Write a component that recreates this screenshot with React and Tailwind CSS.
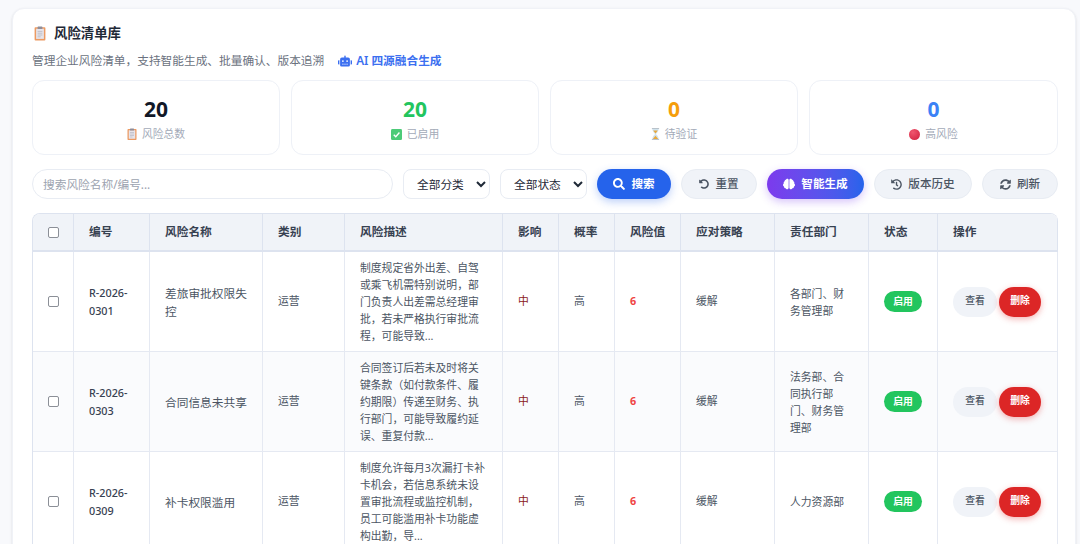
import { FaRobot, FaSearch, FaUndoAlt, FaBrain, FaHistory, FaSyncAlt } from 'react-icons/fa'

const risks = [
  {
    id: 'R-2026-0301',
    name: '差旅审批权限失控',
    desc: '制度规定省外出差、自驾或乘飞机需特别说明，部门负责人出差需总经理审批，若未严格执行审批流程，可能导致...',
    dept: '各部门、财务管理部',
  },
  {
    id: 'R-2026-0303',
    name: '合同信息未共享',
    desc: '合同签订后若未及时将关键条款（如付款条件、履约期限）传递至财务、执行部门，可能导致履约延误、重复付款...',
    dept: '法务部、合同执行部门、财务管理部',
  },
  {
    id: 'R-2026-0309',
    name: '补卡权限滥用',
    desc: '制度允许每月3次漏打卡补卡机会，若信息系统未设置审批流程或监控机制，员工可能滥用补卡功能虚构出勤，导...',
    dept: '人力资源部',
  },
]

function ClipboardIcon({ size = 12 }) {
  return (
    <svg width={size} height={size * 1.25} viewBox="0 0 20 25" className="shrink-0">
      <rect x="1" y="2" width="18" height="22" rx="1.5" fill="#ec9a62" />
      <rect x="3.500" y="4.500" width="13" height="17" fill="#e6e4ea" />
      <rect x="6" y="1" width="8" height="4" rx="1" fill="#8f8d99" />
      <path d="M6 9h8M6 12h8M6 15h8M6 18h5" stroke="#a9a8b4" strokeWidth="1" />
    </svg>
  )
}

function CheckIcon() {
  return (
    <svg width="11" height="11" viewBox="0 0 12 12" className="shrink-0">
      <rect width="12" height="12" rx="1.5" fill="#4ccb78" />
      <path d="M3 6.200 5.200 8.400 9.200 3.900" fill="none" stroke="#fff" strokeWidth="1.500" />
    </svg>
  )
}

function HourglassIcon() {
  return (
    <svg width="9" height="12" viewBox="0 0 10 13" className="shrink-0">
      <path d="M1 .5h8M1 12.500h8" stroke="#a9b4bd" strokeWidth="1" />
      <path d="M1.500 1h7C8.500 4 6 5.500 5.500 6.500 6 7.500 8.500 9 8.500 12h-7C1.500 9 4 7.500 4.500 6.500 4 5.500 1.500 4 1.500 1Z" fill="#cfe3ee" />
      <path d="M2.500 2.500h5L5 6ZM2 12l3-3.500L8 12Z" fill="#e9a83c" />
    </svg>
  )
}

function RedDot() {
  return <span className="w-[11px] h-[11px] rounded-full shrink-0 bg-[radial-gradient(circle_at_35%_30%,#f0566e,#cf1f3d)]" />
}

function Stat({ value, color, icon, label }) {
  return (
    <div className="h-[75px] pt-[2px] rounded-xl border border-[#eef1f7] bg-white flex flex-col items-center justify-center">
      <div className={`text-[21px] leading-[28px] font-bold ${color}`}>{value}</div>
      <div className="mt-[3px] flex items-center gap-[5px] text-[10.8px] leading-[16px] text-[#a3aab8]">
        {icon}
        {label}
      </div>
    </div>
  )
}

function GhostButton({ icon, label, width }) {
  return (
    <button className={`${width} h-[30px] rounded-full bg-[#f0f3f8] border border-[#e8ecf3] flex items-center justify-center gap-[6px] text-[11.6px] font-medium text-[#4b5563]`}>
      {icon}
      {label}
    </button>
  )
}

function App() {
  const th = 'border-r border-b-2 border-[#dde3ef] px-[15px] text-left text-[11.7px] font-semibold text-[#374151] whitespace-nowrap'
  const td = 'border-r border-b border-[#e5e9f2] px-[15px] text-[#4b5563]'

  return (
    <div className="h-[544px] overflow-hidden bg-[#f8f9fc] pt-2 pl-3 pr-1 font-['Noto_Sans','Noto_Sans_CJK_SC',sans-serif]">
      <div className="rounded-t-xl bg-white border border-[#f0f2f7] shadow-sm pt-[14px] pl-[19px] pr-[17px] h-[600px]">
        <div className="flex items-center gap-[8px] h-[20px] pl-[2px] text-[13.4px] font-bold text-[#1f2937]">
          <ClipboardIcon size={12} />
          风险清单库
        </div>
        <div className="mt-[8px] h-[20px] flex items-center text-[11.7px] text-[#6b7280]">
          管理企业风险清单，支持智能生成、批量确认、版本追溯
          <span className="ml-[14px] flex items-center gap-[4px] font-semibold text-[#3b6ff0]">
            <FaRobot className="text-[14px]" />
            AI 四源融合生成
          </span>
        </div>

        <div className="mt-[9px] grid grid-cols-[248px_248px_248px_249px] gap-[11px]">
          <Stat value="20" color="text-[#111827]" icon={<ClipboardIcon size={10} />} label="风险总数" />
          <Stat value="20" color="text-[#22c55e]" icon={<CheckIcon />} label="已启用" />
          <Stat value="0" color="text-[#f59e0b]" icon={<HourglassIcon />} label="待验证" />
          <Stat value="0" color="text-[#3b82f6]" icon={<RedDot />} label="高风险" />
        </div>

        <div className="mt-[14px] flex items-center gap-[10px]">
          <input
            placeholder="搜索风险名称/编号..."
            className="w-[361px] h-[30px] rounded-full border border-[#e8ecf3] bg-white px-[10px] text-[11.7px] placeholder:text-[#9ca3af] outline-none"
          />
          <select className="w-[87px] h-[30px] rounded-lg border border-[#e8ecf3] bg-white pl-[9px] text-[11.7px] text-[#1f2937]">
            <option>全部分类</option>
          </select>
          <select className="w-[87px] h-[30px] rounded-lg border border-[#e8ecf3] bg-white pl-[9px] text-[11.7px] text-[#1f2937]">
            <option>全部状态</option>
          </select>
          <button className="w-[74px] h-[30px] rounded-full bg-[#2563eb] shadow-[0_3px_8px_rgba(37,99,235,0.3)] flex items-center justify-center gap-[6px] text-[11.6px] font-semibold text-white">
            <FaSearch className="text-[12px]" />
            搜索
          </button>
          <GhostButton width="w-[76px]" icon={<FaUndoAlt className="text-[10px]" />} label="重置" />
          <button className="w-[97px] h-[30px] rounded-full bg-gradient-to-r from-[#7c3aed] to-[#2563eb] shadow-[0_3px_8px_rgba(124,58,237,0.3)] flex items-center justify-center gap-[6px] text-[11.6px] font-semibold text-white">
            <FaBrain className="text-[12px]" />
            智能生成
          </button>
          <GhostButton width="w-[98px]" icon={<FaHistory className="text-[11px]" />} label="版本历史" />
          <GhostButton width="w-[76px]" icon={<FaSyncAlt className="text-[11px]" />} label="刷新" />
        </div>

        <div className="mt-[14px] rounded-t-lg border-t border-l border-[#dde3ef] overflow-hidden w-[1026px]">
          <table className="table-fixed w-full border-separate border-spacing-0">
            <colgroup>
              <col className="w-[41px]" />
              <col className="w-[76px]" />
              <col className="w-[113px]" />
              <col className="w-[82px]" />
              <col className="w-[158px]" />
              <col className="w-[56px]" />
              <col className="w-[56px]" />
              <col className="w-[66px]" />
              <col className="w-[94px]" />
              <col className="w-[94px]" />
              <col className="w-[69px]" />
              <col className="w-[120px]" />
            </colgroup>
            <thead className="bg-[#f0f3f8]">
              <tr className="h-[38px]">
                <th className={th}>
                  <span className="block w-[11px] h-[11px] rounded-[2px] border border-[#8b8f97] bg-white" />
                </th>
                {['编号', '风险名称', '类别', '风险描述', '影响', '概率', '风险值', '应对策略', '责任部门', '状态', '操作'].map(h => (
                  <th key={h} className={th}>{h}</th>
                ))}
              </tr>
            </thead>
            <tbody>
              {risks.map((r, i) => (
                <tr key={r.id} className={`h-[100px] ${i === 1 ? 'bg-[#fafbfd]' : 'bg-white'}`}>
                  <td className={td}>
                    <span className="block w-[11px] h-[11px] rounded-[2px] border border-[#8b8f97] bg-white" />
                  </td>
                  <td className={`${td} text-[10.8px] leading-[18px] font-medium text-[#374151]`}>{r.id}</td>
                  <td className={`${td} text-[11.7px] leading-[18px]`}>{r.name}</td>
                  <td className={`${td} text-[10.8px]`}>运营</td>
                  <td className={`${td} text-[10.8px] leading-[17px]`}>{r.desc}</td>
                  <td className={`${td} text-[10.8px] text-[#8b1a1a]`}>中</td>
                  <td className={`${td} text-[10.8px]`}>高</td>
                  <td className={`${td} text-[10.8px] font-bold text-[#ef4444]`}>6</td>
                  <td className={`${td} text-[10.8px]`}>缓解</td>
                  <td className={`${td} text-[10.8px] leading-[17px]`}>{r.dept}</td>
                  <td className={td}>
                    <span className="block w-[38px] h-[21px] rounded-full bg-[#22c55e] text-center text-[9.8px] leading-[21px] font-semibold text-white">启用</span>
                  </td>
                  <td className={td}>
                    <div className="flex items-center gap-[2px]">
                      <button className="w-[44px] h-[30px] shrink-0 rounded-full bg-[#f0f3f8] text-[9.8px] font-medium text-[#4b5563]">查看</button>
                      <button className="w-[42px] h-[30px] shrink-0 rounded-full bg-[#dc2626] shadow-[0_2px_6px_rgba(220,38,38,0.35)] text-[9.8px] font-semibold text-white">删除</button>
                    </div>
                  </td>
                </tr>
              ))}
            </tbody>
          </table>
        </div>
      </div>
    </div>
  )
}

export default App
